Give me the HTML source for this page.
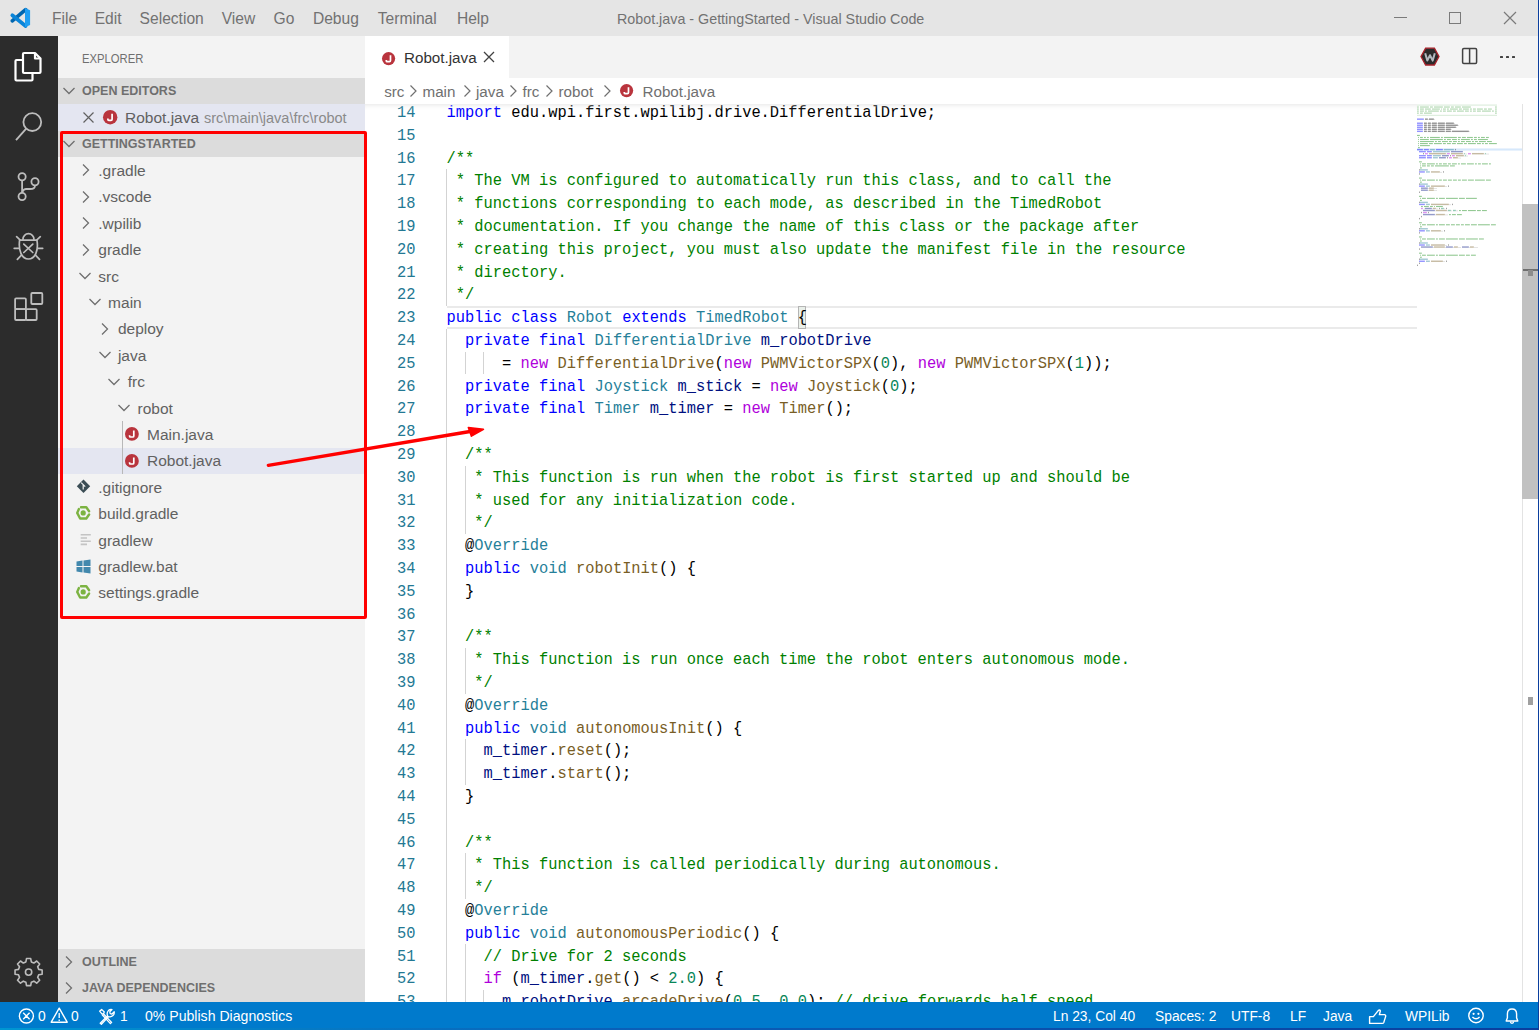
<!DOCTYPE html>
<html><head><meta charset="utf-8">
<style>
*{margin:0;padding:0;box-sizing:border-box}
html,body{width:1539px;height:1030px;overflow:hidden;background:#fff;font-family:"Liberation Sans",sans-serif}
.a{position:absolute}
.nw{white-space:nowrap}
#title{left:0;top:0;width:1539px;height:36px;background:#e5e5e5}
.menu{position:absolute;top:9.5px;font-size:15.6px;line-height:17px;color:#727272;white-space:nowrap}
#act{left:0;top:36px;width:58px;height:966px;background:#2c2c2c}
#side{left:58px;top:36px;width:307px;height:966px;background:#f3f3f3}
.sh{position:absolute;left:0;width:307px;height:26.4px;background:#dcdcdc}
.sht{position:absolute;left:24px;top:6px;font-size:12.5px;line-height:15px;font-weight:bold;color:#6f6f6f;white-space:nowrap}
.row{position:absolute;left:0;width:307px;height:26.4px}
.rt{position:absolute;top:4.8px;font-size:15.5px;line-height:17px;color:#616161;white-space:nowrap}
#tabs{left:365px;top:36px;width:1173px;height:42px;background:#f3f3f3}
#crumb{left:365px;top:78px;width:1173px;height:26px;background:#fff}
.cr{position:absolute;top:4.8px;font-size:15.2px;line-height:17px;color:#707070;white-space:nowrap}
#editor{left:365px;top:104px;width:1173px;height:898px;background:#fff;overflow:hidden}
.ln{position:absolute;left:0;width:50.4px;text-align:right;font-family:"Liberation Mono",monospace;font-size:15.4px;color:#237893;white-space:pre;transform:scaleY(1.1);transform-origin:0 15.5px}
.cl{position:absolute;left:81.6px;font-family:"Liberation Mono",monospace;font-size:15.4px;color:#000;white-space:pre;transform:scaleY(1.1);transform-origin:0 15.5px}
.v{color:#001080}.k{color:#0000ff}.t{color:#267f99}.f{color:#795e26}.n{color:#af00db}.d{color:#098658}.c{color:#008000}
.ig{position:absolute;width:1px;background:#d3d3d3}
#status{left:0;top:1002px;width:1539px;height:26px;background:#007acc}
.st{position:absolute;top:6px;font-size:13.8px;line-height:17px;color:#fff;white-space:nowrap}
</style></head><body>
<div id="title" class="a"><svg class="a" style="left:0;top:0" width="40" height="36" viewBox="0 0 40 36">
<path d="M12.3 20.9 L25.6 9.6" stroke="#0066b0" stroke-width="3.7" stroke-linecap="round"/>
<path d="M12.3 15.3 L25.6 26" stroke="#0a84d8" stroke-width="3.7" stroke-linecap="round"/>
<path d="M25 8.1 L30.1 10.3 L30.1 24.9 L25 27.2 Z" fill="#1f9ef2"/>
</svg><div class="menu" style="left:52.0px;width:22.4px;text-align:center">File</div><div class="menu" style="left:94.7px;width:25.4px;text-align:center">Edit</div><div class="menu" style="left:139.6px;width:61.9px;text-align:center">Selection</div><div class="menu" style="left:221.7px;width:32.6px;text-align:center">View</div><div class="menu" style="left:273.6px;width:19.7px;text-align:center">Go</div><div class="menu" style="left:312.9px;width:45.4px;text-align:center">Debug</div><div class="menu" style="left:377.7px;width:59.2px;text-align:center">Terminal</div><div class="menu" style="left:456.9px;width:32.0px;text-align:center">Help</div><div class="menu" style="left:617px;width:304px;text-align:center;font-size:14.3px;top:10.5px">Robot.java - GettingStarted - Visual Studio Code</div><div class="a" style="left:1393.5px;top:17px;width:13px;height:1px;background:#7a7a7a"></div><div class="a" style="left:1449px;top:12px;width:12px;height:12px;border:1px solid #7a7a7a"></div><svg class="a" style="left:1503px;top:11px" width="14" height="14" viewBox="0 0 14 14"><path d="M1 1 L13 13 M13 1 L1 13" stroke="#7a7a7a" stroke-width="1.2"/></svg></div>
<div id="act" class="a"><svg class="a" style="left:0;top:0" width="58" height="350" viewBox="0 0 58 350">
<g fill="none" stroke="#ffffff" stroke-width="2.2" stroke-linejoin="round">
<path d="M24 17 L35 17 L40.5 22.5 L40.5 36 Q40.5 37 39.5 37 L24 37 Q23 37 23 36 L23 18 Q23 17 24 17 Z"/>
<path d="M35 17 L35 22.5 L40.5 22.5"/>
<path d="M23 24 L16.5 24 Q15.5 24 15.5 25 L15.5 43.5 Q15.5 44.5 16.5 44.5 L31.5 44.5 Q32.5 44.5 32.5 43.5 L32.5 37"/>
</g>
<g fill="none" stroke="#bdbdbd" stroke-width="1.8">
<circle cx="32.3" cy="86.1" r="8.9"/>
<path d="M26.2 92.6 L16 104.2"/>
<circle cx="22.1" cy="140.8" r="3.6"/>
<circle cx="35" cy="145.8" r="3.6"/>
<circle cx="22.1" cy="160.5" r="3.6"/>
<path d="M22.1 144.4 L22.1 156.9"/>
<path d="M35 149.4 Q35 153 30 153 L26 153 Q22.5 153.5 22.3 157"/>
<g stroke-width="1.7" stroke-linecap="round">
<path d="M22.95 203.2 A5.5 5.5 0 0 1 33.95 203.2"/>
<path d="M19.6 204.2 L36.9 204.2 C38.6 213.5 35.6 223 28.45 223 C21.3 223 18.3 213.5 19.6 204.2 Z"/>
<path d="M23.8 208.2 L32.8 216.5 M32.8 208.2 L23.8 216.5"/>
<path d="M16.6 200.7 L20 203.8 M40.3 200.7 L36.9 203.8 M14.2 212.3 L18.6 212.3 M42.7 212.3 L38.3 212.3 M17.4 223.4 L21.2 219.4 M39.5 223.4 L35.7 219.4"/>
</g>
<rect x="15.1" y="262.4" width="10.8" height="10.8" rx="1"/>
<rect x="15.1" y="273.2" width="10.8" height="10.8" rx="1"/>
<rect x="25.9" y="273.2" width="10.8" height="10.8" rx="1"/>
<rect x="31.3" y="257" width="11" height="11" rx="1"/>
</g>
</svg><svg class="a" style="left:0;top:914px" width="58" height="44" viewBox="0 0 58 44"><g transform="translate(28.6 22.1) scale(0.88) translate(-28.6 -24.1)">
<g fill="none" stroke="#bdbdbd" stroke-width="1.8" stroke-linejoin="round">
<path d="M26.2 8.7 L31 8.7 L31.7 12.6 L34.6 13.8 L37.8 11.5 L41.2 14.9 L38.9 18.1 L40.1 21 L44 21.7 L44 26.5 L40.1 27.2 L38.9 30.1 L41.2 33.3 L37.8 36.7 L34.6 34.4 L31.7 35.6 L31 39.5 L26.2 39.5 L25.5 35.6 L22.6 34.4 L19.4 36.7 L16 33.3 L18.3 30.1 L17.1 27.2 L13.2 26.5 L13.2 21.7 L17.1 21 L18.3 18.1 L16 14.9 L19.4 11.5 L22.6 13.8 L25.5 12.6 Z"/>
<circle cx="28.6" cy="24.1" r="3.6"/>
</g></g></svg></div>
<div id="side" class="a"><div class="a nw" style="left:23.6px;top:15.5px;font-size:12.6px;line-height:14px;color:#6f6f6f;transform:scaleX(0.895);transform-origin:0 0">EXPLORER</div><div class="sh" style="top:42.0px"><svg class="a" style="left:4.3px;top:8.2px" width="14" height="10" viewBox="0 0 14 10"><path d="M1.5 2 L7 7.5 L12.5 2" stroke="#6f6f6f" stroke-width="1.3" fill="none"/></svg><div class="sht">OPEN EDITORS</div></div><div class="row" style="top:68.4px;background:#e4e6f1"><svg class="a" style="left:25px;top:8px" width="11" height="11" viewBox="0 0 11 11"><path d="M0.5 0.5 L10.5 10.5 M10.5 0.5 L0.5 10.5" stroke="#616161" stroke-width="1.2"/></svg><svg class="a" style="left:43.5px;top:5.0px" width="16.4" height="16.4" viewBox="0 0 16.4 16.4"><circle cx="8.2" cy="8.2" r="7.2" fill="#b9343d"/><path d="M10.10 4.80 L10.10 10.20 Q10.10 11.30 9.00 11.30 L6.70 11.30 Q5.90 11.30 5.90 10.50 L5.90 9.60" stroke="#fff" stroke-width="1.7" fill="none"/></svg><div class="rt" style="left:67px">Robot.java</div><div class="rt" style="left:146px;font-size:14.5px;top:5.5px;color:#8a8a8a">src\main\java\frc\robot</div></div><div class="sh" style="top:94.8px"><svg class="a" style="left:4.3px;top:8.2px" width="14" height="10" viewBox="0 0 14 10"><path d="M1.5 2 L7 7.5 L12.5 2" stroke="#6f6f6f" stroke-width="1.3" fill="none"/></svg><div class="sht">GETTINGSTARTED</div></div><div class="row" style="top:121.2px;"><svg class="a" style="left:22.5px;top:6.2px" width="10" height="14" viewBox="0 0 10 14"><path d="M2 1.5 L7.5 7 L2 12.5" stroke="#6f6f6f" stroke-width="1.3" fill="none"/></svg><div class="rt" style="left:40.3px">.gradle</div></div><div class="row" style="top:147.6px;"><svg class="a" style="left:22.5px;top:6.2px" width="10" height="14" viewBox="0 0 10 14"><path d="M2 1.5 L7.5 7 L2 12.5" stroke="#6f6f6f" stroke-width="1.3" fill="none"/></svg><div class="rt" style="left:40.3px">.vscode</div></div><div class="row" style="top:174.0px;"><svg class="a" style="left:22.5px;top:6.2px" width="10" height="14" viewBox="0 0 10 14"><path d="M2 1.5 L7.5 7 L2 12.5" stroke="#6f6f6f" stroke-width="1.3" fill="none"/></svg><div class="rt" style="left:40.3px">.wpilib</div></div><div class="row" style="top:200.4px;"><svg class="a" style="left:22.5px;top:6.2px" width="10" height="14" viewBox="0 0 10 14"><path d="M2 1.5 L7.5 7 L2 12.5" stroke="#6f6f6f" stroke-width="1.3" fill="none"/></svg><div class="rt" style="left:40.3px">gradle</div></div><div class="row" style="top:226.8px;"><svg class="a" style="left:20.0px;top:8.2px" width="14" height="10" viewBox="0 0 14 10"><path d="M1.5 2 L7 7.5 L12.5 2" stroke="#6f6f6f" stroke-width="1.3" fill="none"/></svg><div class="rt" style="left:40.3px">src</div></div><div class="row" style="top:253.2px;"><svg class="a" style="left:29.8px;top:8.2px" width="14" height="10" viewBox="0 0 14 10"><path d="M1.5 2 L7 7.5 L12.5 2" stroke="#6f6f6f" stroke-width="1.3" fill="none"/></svg><div class="rt" style="left:50.1px">main</div></div><div class="row" style="top:279.6px;"><svg class="a" style="left:42.1px;top:6.2px" width="10" height="14" viewBox="0 0 10 14"><path d="M2 1.5 L7.5 7 L2 12.5" stroke="#6f6f6f" stroke-width="1.3" fill="none"/></svg><div class="rt" style="left:59.9px">deploy</div></div><div class="row" style="top:306.0px;"><svg class="a" style="left:39.6px;top:8.2px" width="14" height="10" viewBox="0 0 14 10"><path d="M1.5 2 L7 7.5 L12.5 2" stroke="#6f6f6f" stroke-width="1.3" fill="none"/></svg><div class="rt" style="left:59.9px">java</div></div><div class="row" style="top:332.4px;"><svg class="a" style="left:49.4px;top:8.2px" width="14" height="10" viewBox="0 0 14 10"><path d="M1.5 2 L7 7.5 L12.5 2" stroke="#6f6f6f" stroke-width="1.3" fill="none"/></svg><div class="rt" style="left:69.7px">frc</div></div><div class="row" style="top:358.8px;"><svg class="a" style="left:59.2px;top:8.2px" width="14" height="10" viewBox="0 0 14 10"><path d="M1.5 2 L7 7.5 L12.5 2" stroke="#6f6f6f" stroke-width="1.3" fill="none"/></svg><div class="rt" style="left:79.5px">robot</div></div><div class="row" style="top:385.2px;"><svg class="a" style="left:65.5px;top:5.3px" width="15.8" height="15.8" viewBox="0 0 15.8 15.8"><circle cx="7.9" cy="7.9" r="6.9" fill="#b9343d"/><path d="M9.80 4.50 L9.80 9.90 Q9.80 11.00 8.70 11.00 L6.40 11.00 Q5.60 11.00 5.60 10.20 L5.60 9.30" stroke="#fff" stroke-width="1.7" fill="none"/></svg><div class="rt" style="left:89.0px">Main.java</div></div><div class="row" style="top:411.6px;background:#e4e6f1;"><svg class="a" style="left:65.5px;top:5.3px" width="15.8" height="15.8" viewBox="0 0 15.8 15.8"><circle cx="7.9" cy="7.9" r="6.9" fill="#b9343d"/><path d="M9.80 4.50 L9.80 9.90 Q9.80 11.00 8.70 11.00 L6.40 11.00 Q5.60 11.00 5.60 10.20 L5.60 9.30" stroke="#fff" stroke-width="1.7" fill="none"/></svg><div class="rt" style="left:89.0px">Robot.java</div></div><div class="row" style="top:438.0px;"><svg class="a" style="left:18px;top:5.2px" width="15" height="15" viewBox="0 0 15 15"><path d="M7.5 0.6 L14.2 7.3 L7.5 14 L0.8 7.3 Z" fill="#3b4d55"/><path d="M5.2 3.6 L9.2 7.6 M7.2 5.6 L7.2 10.6" stroke="#f3f3f3" stroke-width="1.2"/></svg><div class="rt" style="left:40.3px">.gitignore</div></div><div class="row" style="top:464.4px;"><svg class="a" style="left:17.3px;top:4.2px" width="16" height="16" viewBox="0 0 16 16"><g transform="translate(8.2 7.9)" fill="none" stroke="#7cb342" stroke-width="2.4" stroke-linecap="round" stroke-linejoin="round"><path d="M-2.2 -5.6 L3.1 -5.6 L5.9 -1.6"/><path d="M5.9 1.6 L3.1 5.6 L-3.1 5.6 L-6 0 L-4.3 -3.9"/><circle cx="0" cy="0" r="1.6" fill="#7cb342" stroke-width="2"/></g></svg><div class="rt" style="left:40.3px">build.gradle</div></div><div class="row" style="top:490.8px;"><svg class="a" style="left:22px;top:6px" width="12" height="13" viewBox="0 0 12 13"><path d="M0.7 1.7 H10.8 M0.7 5 H7 M0.7 8.2 H10.8 M0.7 11.4 H7" stroke="#c4c4c4" stroke-width="1.6"/></svg><div class="rt" style="left:40.3px">gradlew</div></div><div class="row" style="top:517.2px;"><svg class="a" style="left:18px;top:6px" width="15" height="15" viewBox="0 0 15 15"><path d="M0.5 2.5 L6.5 1.6 L6.5 7 L0.5 7 Z M7.5 1.4 L14.5 0.4 L14.5 7 L7.5 7 Z M0.5 8 L6.5 8 L6.5 13.4 L0.5 12.5 Z M7.5 8 L14.5 8 L14.5 14.6 L7.5 13.6 Z" fill="#4288ad"/></svg><div class="rt" style="left:40.3px">gradlew.bat</div></div><div class="row" style="top:543.6px;"><svg class="a" style="left:17.3px;top:4.2px" width="16" height="16" viewBox="0 0 16 16"><g transform="translate(8.2 7.9)" fill="none" stroke="#7cb342" stroke-width="2.4" stroke-linecap="round" stroke-linejoin="round"><path d="M-2.2 -5.6 L3.1 -5.6 L5.9 -1.6"/><path d="M5.9 1.6 L3.1 5.6 L-3.1 5.6 L-6 0 L-4.3 -3.9"/><circle cx="0" cy="0" r="1.6" fill="#7cb342" stroke-width="2"/></g></svg><div class="rt" style="left:40.3px">settings.gradle</div></div><div class="a" style="left:63.6px;top:385.2px;width:1px;height:52.8px;background:#b8b8b8"></div><div class="sh" style="top:912.8px"><svg class="a" style="left:5.5px;top:6.2px" width="10" height="14" viewBox="0 0 10 14"><path d="M2 1.5 L7.5 7 L2 12.5" stroke="#6f6f6f" stroke-width="1.3" fill="none"/></svg><div class="sht">OUTLINE</div></div><div class="sh" style="top:939.2px"><svg class="a" style="left:5.5px;top:6.2px" width="10" height="14" viewBox="0 0 10 14"><path d="M2 1.5 L7.5 7 L2 12.5" stroke="#6f6f6f" stroke-width="1.3" fill="none"/></svg><div class="sht">JAVA DEPENDENCIES</div></div></div>
<div id="tabs" class="a"><div class="a" style="left:0;top:0;width:144px;height:42px;background:#fff"><svg class="a" style="left:15.7px;top:14.7px" width="15.2" height="15.2" viewBox="0 0 15.2 15.2"><circle cx="7.6" cy="7.6" r="6.6" fill="#b9343d"/><path d="M9.50 4.20 L9.50 9.60 Q9.50 10.70 8.40 10.70 L6.10 10.70 Q5.30 10.70 5.30 9.90 L5.30 9.00" stroke="#fff" stroke-width="1.7" fill="none"/></svg><div class="a nw" style="left:39px;top:13px;font-size:15.2px;line-height:17px;color:#333">Robot.java</div><svg class="a" style="left:118px;top:15px" width="12" height="12" viewBox="0 0 12 12"><path d="M1 1 L11 11 M11 1 L1 11" stroke="#424242" stroke-width="1.3"/></svg></div><svg class="a" style="left:1055px;top:11px" width="20" height="19" viewBox="0 0 20 19"><path d="M5.6 1.2 L14.4 1.2 L19 9.6 L14.4 18 L5.6 18 L1 9.6 Z" fill="#2b2b2b" stroke="#a8222b" stroke-width="1.3"/><path d="M5.2 6.2 L7.3 13.6 L10 8.2 L12.7 13.6 L14.8 6.2" stroke="#b4b8bf" stroke-width="2" fill="none" stroke-linejoin="round"/></svg><svg class="a" style="left:1096px;top:11px" width="18" height="18" viewBox="0 0 18 18"><rect x="1.6" y="1.6" width="14" height="14.8" rx="1.2" fill="none" stroke="#424242" stroke-width="1.5"/><path d="M8.6 2 L8.6 16" stroke="#424242" stroke-width="1.5"/></svg><div class="a" style="left:1135.3px;top:19.8px;width:2.3px;height:2.3px;border-radius:0.5px;background:#424242"></div><div class="a" style="left:1141.3px;top:19.8px;width:2.3px;height:2.3px;border-radius:0.5px;background:#424242"></div><div class="a" style="left:1147.3px;top:19.8px;width:2.3px;height:2.3px;border-radius:0.5px;background:#424242"></div></div>
<div id="crumb" class="a"><div class="cr" style="left:19.2px">src</div><div class="cr" style="left:57.5px">main</div><div class="cr" style="left:111.0px">java</div><div class="cr" style="left:157.5px">frc</div><div class="cr" style="left:193.5px">robot</div><div class="cr" style="left:277.5px">Robot.java</div><svg class="a" style="left:43.5px;top:6px" width="9" height="14" viewBox="0 0 9 14"><path d="M1.5 1.5 L7 7 L1.5 12.5" stroke="#707070" stroke-width="1.2" fill="none"/></svg><svg class="a" style="left:97.5px;top:6px" width="9" height="14" viewBox="0 0 9 14"><path d="M1.5 1.5 L7 7 L1.5 12.5" stroke="#707070" stroke-width="1.2" fill="none"/></svg><svg class="a" style="left:143.5px;top:6px" width="9" height="14" viewBox="0 0 9 14"><path d="M1.5 1.5 L7 7 L1.5 12.5" stroke="#707070" stroke-width="1.2" fill="none"/></svg><svg class="a" style="left:179.5px;top:6px" width="9" height="14" viewBox="0 0 9 14"><path d="M1.5 1.5 L7 7 L1.5 12.5" stroke="#707070" stroke-width="1.2" fill="none"/></svg><svg class="a" style="left:237.5px;top:6px" width="9" height="14" viewBox="0 0 9 14"><path d="M1.5 1.5 L7 7 L1.5 12.5" stroke="#707070" stroke-width="1.2" fill="none"/></svg><svg class="a" style="left:254.4px;top:5.4px" width="15.2" height="15.2" viewBox="0 0 15.2 15.2"><circle cx="7.6" cy="7.6" r="6.6" fill="#b9343d"/><path d="M9.50 4.20 L9.50 9.60 Q9.50 10.70 8.40 10.70 L6.10 10.70 Q5.30 10.70 5.30 9.90 L5.30 9.00" stroke="#fff" stroke-width="1.7" fill="none"/></svg></div>
<div id="editor" class="a"><div class="a" style="left:82px;top:202px;width:970px;height:23px;border-top:2px solid #eaeaea;border-bottom:2px solid #eaeaea"></div><div class="a" style="left:433px;top:202px;width:8px;height:23px;border:1.2px solid #b4b4b4;background:#e9efe9"></div><div class="ig" style="left:81.0px;top:65.20px;height:22.80px"></div><div class="ig" style="left:81.0px;top:88.00px;height:22.80px"></div><div class="ig" style="left:81.0px;top:110.80px;height:22.80px"></div><div class="ig" style="left:81.0px;top:133.60px;height:22.80px"></div><div class="ig" style="left:81.0px;top:156.40px;height:22.80px"></div><div class="ig" style="left:81.0px;top:179.20px;height:22.80px"></div><div class="ig" style="left:81.0px;top:224.80px;height:22.80px"></div><div class="ig" style="left:81.0px;top:247.60px;height:22.80px"></div><div class="ig" style="left:100.0px;top:247.60px;height:22.80px"></div><div class="ig" style="left:118.4px;top:247.60px;height:22.80px"></div><div class="ig" style="left:81.0px;top:270.40px;height:22.80px"></div><div class="ig" style="left:81.0px;top:293.20px;height:22.80px"></div><div class="ig" style="left:81.0px;top:316.00px;height:22.80px"></div><div class="ig" style="left:81.0px;top:338.80px;height:22.80px"></div><div class="ig" style="left:81.0px;top:361.60px;height:22.80px"></div><div class="ig" style="left:100.0px;top:361.60px;height:22.80px"></div><div class="ig" style="left:81.0px;top:384.40px;height:22.80px"></div><div class="ig" style="left:100.0px;top:384.40px;height:22.80px"></div><div class="ig" style="left:81.0px;top:407.20px;height:22.80px"></div><div class="ig" style="left:100.0px;top:407.20px;height:22.80px"></div><div class="ig" style="left:81.0px;top:430.00px;height:22.80px"></div><div class="ig" style="left:81.0px;top:452.80px;height:22.80px"></div><div class="ig" style="left:81.0px;top:475.60px;height:22.80px"></div><div class="ig" style="left:81.0px;top:498.40px;height:22.80px"></div><div class="ig" style="left:81.0px;top:521.20px;height:22.80px"></div><div class="ig" style="left:81.0px;top:544.00px;height:22.80px"></div><div class="ig" style="left:100.0px;top:544.00px;height:22.80px"></div><div class="ig" style="left:81.0px;top:566.80px;height:22.80px"></div><div class="ig" style="left:100.0px;top:566.80px;height:22.80px"></div><div class="ig" style="left:81.0px;top:589.60px;height:22.80px"></div><div class="ig" style="left:81.0px;top:612.40px;height:22.80px"></div><div class="ig" style="left:81.0px;top:635.20px;height:22.80px"></div><div class="ig" style="left:100.0px;top:635.20px;height:22.80px"></div><div class="ig" style="left:81.0px;top:658.00px;height:22.80px"></div><div class="ig" style="left:100.0px;top:658.00px;height:22.80px"></div><div class="ig" style="left:81.0px;top:680.80px;height:22.80px"></div><div class="ig" style="left:81.0px;top:703.60px;height:22.80px"></div><div class="ig" style="left:81.0px;top:726.40px;height:22.80px"></div><div class="ig" style="left:81.0px;top:749.20px;height:22.80px"></div><div class="ig" style="left:100.0px;top:749.20px;height:22.80px"></div><div class="ig" style="left:81.0px;top:772.00px;height:22.80px"></div><div class="ig" style="left:100.0px;top:772.00px;height:22.80px"></div><div class="ig" style="left:81.0px;top:794.80px;height:22.80px"></div><div class="ig" style="left:81.0px;top:817.60px;height:22.80px"></div><div class="ig" style="left:81.0px;top:840.40px;height:22.80px"></div><div class="ig" style="left:100.0px;top:840.40px;height:22.80px"></div><div class="ig" style="left:81.0px;top:863.20px;height:22.80px"></div><div class="ig" style="left:100.0px;top:863.20px;height:22.80px"></div><div class="ig" style="left:81.0px;top:886.00px;height:22.80px"></div><div class="ig" style="left:100.0px;top:886.00px;height:22.80px"></div><div class="ig" style="left:118.4px;top:886.00px;height:22.80px"></div><div class="ln" style="top:-2.00px;line-height:22.8px">14</div><div class="cl" style="top:-2.00px;line-height:22.8px"><span class="k">import</span> edu.wpi.first.wpilibj.drive.DifferentialDrive;</div><div class="ln" style="top:20.80px;line-height:22.8px">15</div><div class="cl" style="top:20.80px;line-height:22.8px"></div><div class="ln" style="top:43.60px;line-height:22.8px">16</div><div class="cl" style="top:43.60px;line-height:22.8px"><span class="c">/**</span></div><div class="ln" style="top:66.40px;line-height:22.8px">17</div><div class="cl" style="top:66.40px;line-height:22.8px"><span class="c"> * The VM is configured to automatically run this class, and to call the</span></div><div class="ln" style="top:89.20px;line-height:22.8px">18</div><div class="cl" style="top:89.20px;line-height:22.8px"><span class="c"> * functions corresponding to each mode, as described in the TimedRobot</span></div><div class="ln" style="top:112.00px;line-height:22.8px">19</div><div class="cl" style="top:112.00px;line-height:22.8px"><span class="c"> * documentation. If you change the name of this class or the package after</span></div><div class="ln" style="top:134.80px;line-height:22.8px">20</div><div class="cl" style="top:134.80px;line-height:22.8px"><span class="c"> * creating this project, you must also update the manifest file in the resource</span></div><div class="ln" style="top:157.60px;line-height:22.8px">21</div><div class="cl" style="top:157.60px;line-height:22.8px"><span class="c"> * directory.</span></div><div class="ln" style="top:180.40px;line-height:22.8px">22</div><div class="cl" style="top:180.40px;line-height:22.8px"><span class="c"> */</span></div><div class="ln" style="top:203.20px;line-height:22.8px">23</div><div class="cl" style="top:203.20px;line-height:22.8px"><span class="k">public</span> <span class="k">class</span> <span class="t">Robot</span> <span class="k">extends</span> <span class="t">TimedRobot</span> {</div><div class="ln" style="top:226.00px;line-height:22.8px">24</div><div class="cl" style="top:226.00px;line-height:22.8px">  <span class="k">private</span> <span class="k">final</span> <span class="t">DifferentialDrive</span> <span class="v">m_robotDrive</span></div><div class="ln" style="top:248.80px;line-height:22.8px">25</div><div class="cl" style="top:248.80px;line-height:22.8px">      = <span class="n">new</span> <span class="f">DifferentialDrive</span>(<span class="n">new</span> <span class="f">PWMVictorSPX</span>(<span class="d">0</span>), <span class="n">new</span> <span class="f">PWMVictorSPX</span>(<span class="d">1</span>));</div><div class="ln" style="top:271.60px;line-height:22.8px">26</div><div class="cl" style="top:271.60px;line-height:22.8px">  <span class="k">private</span> <span class="k">final</span> <span class="t">Joystick</span> <span class="v">m_stick</span> = <span class="n">new</span> <span class="f">Joystick</span>(<span class="d">0</span>);</div><div class="ln" style="top:294.40px;line-height:22.8px">27</div><div class="cl" style="top:294.40px;line-height:22.8px">  <span class="k">private</span> <span class="k">final</span> <span class="t">Timer</span> <span class="v">m_timer</span> = <span class="n">new</span> <span class="f">Timer</span>();</div><div class="ln" style="top:317.20px;line-height:22.8px">28</div><div class="cl" style="top:317.20px;line-height:22.8px"></div><div class="ln" style="top:340.00px;line-height:22.8px">29</div><div class="cl" style="top:340.00px;line-height:22.8px"><span class="c">  /**</span></div><div class="ln" style="top:362.80px;line-height:22.8px">30</div><div class="cl" style="top:362.80px;line-height:22.8px"><span class="c">   * This function is run when the robot is first started up and should be</span></div><div class="ln" style="top:385.60px;line-height:22.8px">31</div><div class="cl" style="top:385.60px;line-height:22.8px"><span class="c">   * used for any initialization code.</span></div><div class="ln" style="top:408.40px;line-height:22.8px">32</div><div class="cl" style="top:408.40px;line-height:22.8px"><span class="c">   */</span></div><div class="ln" style="top:431.20px;line-height:22.8px">33</div><div class="cl" style="top:431.20px;line-height:22.8px">  @<span class="t">Override</span></div><div class="ln" style="top:454.00px;line-height:22.8px">34</div><div class="cl" style="top:454.00px;line-height:22.8px">  <span class="k">public</span> <span class="t">void</span> <span class="f">robotInit</span>() {</div><div class="ln" style="top:476.80px;line-height:22.8px">35</div><div class="cl" style="top:476.80px;line-height:22.8px">  }</div><div class="ln" style="top:499.60px;line-height:22.8px">36</div><div class="cl" style="top:499.60px;line-height:22.8px"></div><div class="ln" style="top:522.40px;line-height:22.8px">37</div><div class="cl" style="top:522.40px;line-height:22.8px"><span class="c">  /**</span></div><div class="ln" style="top:545.20px;line-height:22.8px">38</div><div class="cl" style="top:545.20px;line-height:22.8px"><span class="c">   * This function is run once each time the robot enters autonomous mode.</span></div><div class="ln" style="top:568.00px;line-height:22.8px">39</div><div class="cl" style="top:568.00px;line-height:22.8px"><span class="c">   */</span></div><div class="ln" style="top:590.80px;line-height:22.8px">40</div><div class="cl" style="top:590.80px;line-height:22.8px">  @<span class="t">Override</span></div><div class="ln" style="top:613.60px;line-height:22.8px">41</div><div class="cl" style="top:613.60px;line-height:22.8px">  <span class="k">public</span> <span class="t">void</span> <span class="f">autonomousInit</span>() {</div><div class="ln" style="top:636.40px;line-height:22.8px">42</div><div class="cl" style="top:636.40px;line-height:22.8px">    <span class="v">m_timer</span>.<span class="f">reset</span>();</div><div class="ln" style="top:659.20px;line-height:22.8px">43</div><div class="cl" style="top:659.20px;line-height:22.8px">    <span class="v">m_timer</span>.<span class="f">start</span>();</div><div class="ln" style="top:682.00px;line-height:22.8px">44</div><div class="cl" style="top:682.00px;line-height:22.8px">  }</div><div class="ln" style="top:704.80px;line-height:22.8px">45</div><div class="cl" style="top:704.80px;line-height:22.8px"></div><div class="ln" style="top:727.60px;line-height:22.8px">46</div><div class="cl" style="top:727.60px;line-height:22.8px"><span class="c">  /**</span></div><div class="ln" style="top:750.40px;line-height:22.8px">47</div><div class="cl" style="top:750.40px;line-height:22.8px"><span class="c">   * This function is called periodically during autonomous.</span></div><div class="ln" style="top:773.20px;line-height:22.8px">48</div><div class="cl" style="top:773.20px;line-height:22.8px"><span class="c">   */</span></div><div class="ln" style="top:796.00px;line-height:22.8px">49</div><div class="cl" style="top:796.00px;line-height:22.8px">  @<span class="t">Override</span></div><div class="ln" style="top:818.80px;line-height:22.8px">50</div><div class="cl" style="top:818.80px;line-height:22.8px">  <span class="k">public</span> <span class="t">void</span> <span class="f">autonomousPeriodic</span>() {</div><div class="ln" style="top:841.60px;line-height:22.8px">51</div><div class="cl" style="top:841.60px;line-height:22.8px">    <span class="c">// Drive for 2 seconds</span></div><div class="ln" style="top:864.40px;line-height:22.8px">52</div><div class="cl" style="top:864.40px;line-height:22.8px">    <span class="n">if</span> (<span class="v">m_timer</span>.<span class="f">get</span>() &lt; <span class="d">2.0</span>) {</div><div class="ln" style="top:887.20px;line-height:22.8px">53</div><div class="cl" style="top:887.20px;line-height:22.8px">      <span class="v">m_robotDrive</span>.<span class="f">arcadeDrive</span>(<span class="d">0.5</span>, <span class="d">0.0</span>); <span class="c">// drive forwards half speed</span></div><div class="a" style="left:0;top:0;width:1052px;height:6px;box-shadow:inset 0 6px 6px -6px #dddddd"></div><svg class="a" style="left:1052px;top:0.3px" width="105" height="175" viewBox="0 0 105 175"><rect x="0" y="44.46" width="105" height="2.1" fill="#d6e8fb"/><g opacity="0.42"><rect x="0.00" y="0.75" width="80.00" height="0.6" fill="#008000" opacity="0.6"/><rect x="0.00" y="2.48" width="1.85" height="1.1" fill="#008000" opacity="0.75"/><rect x="3.00" y="2.48" width="8.85" height="1.1" fill="#008000" opacity="0.75"/><rect x="13.00" y="2.48" width="2.85" height="1.1" fill="#008000" opacity="0.75"/><rect x="17.00" y="2.48" width="8.85" height="1.1" fill="#008000" opacity="0.75"/><rect x="27.00" y="2.48" width="5.85" height="1.1" fill="#008000" opacity="0.75"/><rect x="34.00" y="2.48" width="2.85" height="1.1" fill="#008000" opacity="0.75"/><rect x="38.00" y="2.48" width="5.85" height="1.1" fill="#008000" opacity="0.75"/><rect x="45.00" y="2.48" width="8.85" height="1.1" fill="#008000" opacity="0.75"/><rect x="78.00" y="2.48" width="1.85" height="1.1" fill="#008000" opacity="0.75"/><rect x="0.00" y="4.51" width="1.85" height="1.1" fill="#008000" opacity="0.75"/><rect x="3.00" y="4.51" width="3.85" height="1.1" fill="#008000" opacity="0.75"/><rect x="8.00" y="4.51" width="5.85" height="1.1" fill="#008000" opacity="0.75"/><rect x="15.00" y="4.51" width="7.85" height="1.1" fill="#008000" opacity="0.75"/><rect x="24.00" y="4.51" width="0.85" height="1.1" fill="#008000" opacity="0.75"/><rect x="26.00" y="4.51" width="2.85" height="1.1" fill="#008000" opacity="0.75"/><rect x="30.00" y="4.51" width="1.85" height="1.1" fill="#008000" opacity="0.75"/><rect x="33.00" y="4.51" width="7.85" height="1.1" fill="#008000" opacity="0.75"/><rect x="42.00" y="4.51" width="2.85" height="1.1" fill="#008000" opacity="0.75"/><rect x="46.00" y="4.51" width="5.85" height="1.1" fill="#008000" opacity="0.75"/><rect x="53.00" y="4.51" width="1.85" height="1.1" fill="#008000" opacity="0.75"/><rect x="56.00" y="4.51" width="2.85" height="1.1" fill="#008000" opacity="0.75"/><rect x="60.00" y="4.51" width="5.85" height="1.1" fill="#008000" opacity="0.75"/><rect x="67.00" y="4.51" width="2.85" height="1.1" fill="#008000" opacity="0.75"/><rect x="71.00" y="4.51" width="3.85" height="1.1" fill="#008000" opacity="0.75"/><rect x="78.00" y="4.51" width="1.85" height="1.1" fill="#008000" opacity="0.75"/><rect x="0.00" y="6.54" width="1.85" height="1.1" fill="#008000" opacity="0.75"/><rect x="3.00" y="6.54" width="3.85" height="1.1" fill="#008000" opacity="0.75"/><rect x="8.00" y="6.54" width="1.85" height="1.1" fill="#008000" opacity="0.75"/><rect x="11.00" y="6.54" width="10.85" height="1.1" fill="#008000" opacity="0.75"/><rect x="23.00" y="6.54" width="1.85" height="1.1" fill="#008000" opacity="0.75"/><rect x="26.00" y="6.54" width="2.85" height="1.1" fill="#008000" opacity="0.75"/><rect x="30.00" y="6.54" width="4.85" height="1.1" fill="#008000" opacity="0.75"/><rect x="36.00" y="6.54" width="2.85" height="1.1" fill="#008000" opacity="0.75"/><rect x="40.00" y="6.54" width="6.85" height="1.1" fill="#008000" opacity="0.75"/><rect x="48.00" y="6.54" width="3.85" height="1.1" fill="#008000" opacity="0.75"/><rect x="53.00" y="6.54" width="1.85" height="1.1" fill="#008000" opacity="0.75"/><rect x="56.00" y="6.54" width="2.85" height="1.1" fill="#008000" opacity="0.75"/><rect x="60.00" y="6.54" width="3.85" height="1.1" fill="#008000" opacity="0.75"/><rect x="65.00" y="6.54" width="8.85" height="1.1" fill="#008000" opacity="0.75"/><rect x="75.00" y="6.54" width="1.85" height="1.1" fill="#008000" opacity="0.75"/><rect x="78.00" y="6.54" width="1.85" height="1.1" fill="#008000" opacity="0.75"/><rect x="0.00" y="8.57" width="1.85" height="1.1" fill="#008000" opacity="0.75"/><rect x="3.00" y="8.57" width="2.85" height="1.1" fill="#008000" opacity="0.75"/><rect x="7.00" y="8.57" width="7.85" height="1.1" fill="#008000" opacity="0.75"/><rect x="78.00" y="8.57" width="1.85" height="1.1" fill="#008000" opacity="0.75"/><rect x="0.00" y="10.90" width="80.00" height="0.6" fill="#008000" opacity="0.6"/><rect x="0.00" y="14.46" width="6.85" height="1.4" fill="#0000ff"/><rect x="8.00" y="14.46" width="2.85" height="1.4" fill="#000000"/><rect x="11.20" y="15.16" width="0.6" height="0.7" fill="#000000" opacity="0.6"/><rect x="12.00" y="14.46" width="4.85" height="1.4" fill="#000000"/><rect x="17.20" y="15.16" width="0.6" height="0.7" fill="#000000" opacity="0.6"/><rect x="0.00" y="18.52" width="5.85" height="1.4" fill="#0000ff"/><rect x="7.00" y="18.52" width="2.85" height="1.4" fill="#000000"/><rect x="10.20" y="19.22" width="0.6" height="0.7" fill="#000000" opacity="0.6"/><rect x="11.00" y="18.52" width="2.85" height="1.4" fill="#000000"/><rect x="14.20" y="19.22" width="0.6" height="0.7" fill="#000000" opacity="0.6"/><rect x="15.00" y="18.52" width="4.85" height="1.4" fill="#000000"/><rect x="20.20" y="19.22" width="0.6" height="0.7" fill="#000000" opacity="0.6"/><rect x="21.00" y="18.52" width="6.85" height="1.4" fill="#000000"/><rect x="28.20" y="19.22" width="0.6" height="0.7" fill="#000000" opacity="0.6"/><rect x="29.00" y="18.52" width="7.85" height="1.4" fill="#000000"/><rect x="37.20" y="19.22" width="0.6" height="0.7" fill="#000000" opacity="0.6"/><rect x="0.00" y="20.55" width="5.85" height="1.4" fill="#0000ff"/><rect x="7.00" y="20.55" width="2.85" height="1.4" fill="#000000"/><rect x="10.20" y="21.25" width="0.6" height="0.7" fill="#000000" opacity="0.6"/><rect x="11.00" y="20.55" width="2.85" height="1.4" fill="#000000"/><rect x="14.20" y="21.25" width="0.6" height="0.7" fill="#000000" opacity="0.6"/><rect x="15.00" y="20.55" width="4.85" height="1.4" fill="#000000"/><rect x="20.20" y="21.25" width="0.6" height="0.7" fill="#000000" opacity="0.6"/><rect x="21.00" y="20.55" width="6.85" height="1.4" fill="#000000"/><rect x="28.20" y="21.25" width="0.6" height="0.7" fill="#000000" opacity="0.6"/><rect x="29.00" y="20.55" width="11.85" height="1.4" fill="#000000"/><rect x="41.20" y="21.25" width="0.6" height="0.7" fill="#000000" opacity="0.6"/><rect x="0.00" y="22.58" width="5.85" height="1.4" fill="#0000ff"/><rect x="7.00" y="22.58" width="2.85" height="1.4" fill="#000000"/><rect x="10.20" y="23.28" width="0.6" height="0.7" fill="#000000" opacity="0.6"/><rect x="11.00" y="22.58" width="2.85" height="1.4" fill="#000000"/><rect x="14.20" y="23.28" width="0.6" height="0.7" fill="#000000" opacity="0.6"/><rect x="15.00" y="22.58" width="4.85" height="1.4" fill="#000000"/><rect x="20.20" y="23.28" width="0.6" height="0.7" fill="#000000" opacity="0.6"/><rect x="21.00" y="22.58" width="6.85" height="1.4" fill="#000000"/><rect x="28.20" y="23.28" width="0.6" height="0.7" fill="#000000" opacity="0.6"/><rect x="29.00" y="22.58" width="9.85" height="1.4" fill="#000000"/><rect x="39.20" y="23.28" width="0.6" height="0.7" fill="#000000" opacity="0.6"/><rect x="0.00" y="24.61" width="5.85" height="1.4" fill="#0000ff"/><rect x="7.00" y="24.61" width="2.85" height="1.4" fill="#000000"/><rect x="10.20" y="25.31" width="0.6" height="0.7" fill="#000000" opacity="0.6"/><rect x="11.00" y="24.61" width="2.85" height="1.4" fill="#000000"/><rect x="14.20" y="25.31" width="0.6" height="0.7" fill="#000000" opacity="0.6"/><rect x="15.00" y="24.61" width="4.85" height="1.4" fill="#000000"/><rect x="20.20" y="25.31" width="0.6" height="0.7" fill="#000000" opacity="0.6"/><rect x="21.00" y="24.61" width="6.85" height="1.4" fill="#000000"/><rect x="28.20" y="25.31" width="0.6" height="0.7" fill="#000000" opacity="0.6"/><rect x="29.00" y="24.61" width="4.85" height="1.4" fill="#000000"/><rect x="34.20" y="25.31" width="0.6" height="0.7" fill="#000000" opacity="0.6"/><rect x="0.00" y="26.64" width="5.85" height="1.4" fill="#0000ff"/><rect x="7.00" y="26.64" width="2.85" height="1.4" fill="#000000"/><rect x="10.20" y="27.34" width="0.6" height="0.7" fill="#000000" opacity="0.6"/><rect x="11.00" y="26.64" width="2.85" height="1.4" fill="#000000"/><rect x="14.20" y="27.34" width="0.6" height="0.7" fill="#000000" opacity="0.6"/><rect x="15.00" y="26.64" width="4.85" height="1.4" fill="#000000"/><rect x="20.20" y="27.34" width="0.6" height="0.7" fill="#000000" opacity="0.6"/><rect x="21.00" y="26.64" width="6.85" height="1.4" fill="#000000"/><rect x="28.20" y="27.34" width="0.6" height="0.7" fill="#000000" opacity="0.6"/><rect x="29.00" y="26.64" width="4.85" height="1.4" fill="#000000"/><rect x="34.20" y="27.34" width="0.6" height="0.7" fill="#000000" opacity="0.6"/><rect x="35.00" y="26.64" width="16.85" height="1.4" fill="#000000"/><rect x="52.20" y="27.34" width="0.6" height="0.7" fill="#000000" opacity="0.6"/><rect x="0.00" y="30.90" width="2.85" height="1.1" fill="#008000" opacity="1"/><rect x="1.00" y="32.93" width="0.85" height="1.1" fill="#008000" opacity="1"/><rect x="3.00" y="32.93" width="2.85" height="1.1" fill="#008000" opacity="1"/><rect x="7.00" y="32.93" width="1.85" height="1.1" fill="#008000" opacity="1"/><rect x="10.00" y="32.93" width="1.85" height="1.1" fill="#008000" opacity="1"/><rect x="13.00" y="32.93" width="9.85" height="1.1" fill="#008000" opacity="1"/><rect x="24.00" y="32.93" width="1.85" height="1.1" fill="#008000" opacity="1"/><rect x="27.00" y="32.93" width="12.85" height="1.1" fill="#008000" opacity="1"/><rect x="41.00" y="32.93" width="2.85" height="1.1" fill="#008000" opacity="1"/><rect x="45.00" y="32.93" width="3.85" height="1.1" fill="#008000" opacity="1"/><rect x="50.00" y="32.93" width="5.85" height="1.1" fill="#008000" opacity="1"/><rect x="57.00" y="32.93" width="2.85" height="1.1" fill="#008000" opacity="1"/><rect x="61.00" y="32.93" width="1.85" height="1.1" fill="#008000" opacity="1"/><rect x="64.00" y="32.93" width="3.85" height="1.1" fill="#008000" opacity="1"/><rect x="69.00" y="32.93" width="2.85" height="1.1" fill="#008000" opacity="1"/><rect x="1.00" y="34.96" width="0.85" height="1.1" fill="#008000" opacity="1"/><rect x="3.00" y="34.96" width="8.85" height="1.1" fill="#008000" opacity="1"/><rect x="13.00" y="34.96" width="12.85" height="1.1" fill="#008000" opacity="1"/><rect x="27.00" y="34.96" width="1.85" height="1.1" fill="#008000" opacity="1"/><rect x="30.00" y="34.96" width="3.85" height="1.1" fill="#008000" opacity="1"/><rect x="35.00" y="34.96" width="4.85" height="1.1" fill="#008000" opacity="1"/><rect x="41.00" y="34.96" width="1.85" height="1.1" fill="#008000" opacity="1"/><rect x="44.00" y="34.96" width="8.85" height="1.1" fill="#008000" opacity="1"/><rect x="54.00" y="34.96" width="1.85" height="1.1" fill="#008000" opacity="1"/><rect x="57.00" y="34.96" width="2.85" height="1.1" fill="#008000" opacity="1"/><rect x="61.00" y="34.96" width="9.85" height="1.1" fill="#008000" opacity="1"/><rect x="1.00" y="36.99" width="0.85" height="1.1" fill="#008000" opacity="1"/><rect x="3.00" y="36.99" width="13.85" height="1.1" fill="#008000" opacity="1"/><rect x="18.00" y="36.99" width="1.85" height="1.1" fill="#008000" opacity="1"/><rect x="21.00" y="36.99" width="2.85" height="1.1" fill="#008000" opacity="1"/><rect x="25.00" y="36.99" width="5.85" height="1.1" fill="#008000" opacity="1"/><rect x="32.00" y="36.99" width="2.85" height="1.1" fill="#008000" opacity="1"/><rect x="36.00" y="36.99" width="3.85" height="1.1" fill="#008000" opacity="1"/><rect x="41.00" y="36.99" width="1.85" height="1.1" fill="#008000" opacity="1"/><rect x="44.00" y="36.99" width="3.85" height="1.1" fill="#008000" opacity="1"/><rect x="49.00" y="36.99" width="4.85" height="1.1" fill="#008000" opacity="1"/><rect x="55.00" y="36.99" width="1.85" height="1.1" fill="#008000" opacity="1"/><rect x="58.00" y="36.99" width="2.85" height="1.1" fill="#008000" opacity="1"/><rect x="62.00" y="36.99" width="6.85" height="1.1" fill="#008000" opacity="1"/><rect x="70.00" y="36.99" width="4.85" height="1.1" fill="#008000" opacity="1"/><rect x="1.00" y="39.02" width="0.85" height="1.1" fill="#008000" opacity="1"/><rect x="3.00" y="39.02" width="7.85" height="1.1" fill="#008000" opacity="1"/><rect x="12.00" y="39.02" width="3.85" height="1.1" fill="#008000" opacity="1"/><rect x="17.00" y="39.02" width="7.85" height="1.1" fill="#008000" opacity="1"/><rect x="26.00" y="39.02" width="2.85" height="1.1" fill="#008000" opacity="1"/><rect x="30.00" y="39.02" width="3.85" height="1.1" fill="#008000" opacity="1"/><rect x="35.00" y="39.02" width="3.85" height="1.1" fill="#008000" opacity="1"/><rect x="40.00" y="39.02" width="5.85" height="1.1" fill="#008000" opacity="1"/><rect x="47.00" y="39.02" width="2.85" height="1.1" fill="#008000" opacity="1"/><rect x="51.00" y="39.02" width="7.85" height="1.1" fill="#008000" opacity="1"/><rect x="60.00" y="39.02" width="3.85" height="1.1" fill="#008000" opacity="1"/><rect x="65.00" y="39.02" width="1.85" height="1.1" fill="#008000" opacity="1"/><rect x="68.00" y="39.02" width="2.85" height="1.1" fill="#008000" opacity="1"/><rect x="72.00" y="39.02" width="7.85" height="1.1" fill="#008000" opacity="1"/><rect x="1.00" y="41.05" width="0.85" height="1.1" fill="#008000" opacity="1"/><rect x="3.00" y="41.05" width="9.85" height="1.1" fill="#008000" opacity="1"/><rect x="1.00" y="43.08" width="1.85" height="1.1" fill="#008000" opacity="1"/><rect x="0.00" y="44.91" width="5.85" height="1.4" fill="#0000ff"/><rect x="7.00" y="44.91" width="4.85" height="1.4" fill="#0000ff"/><rect x="13.00" y="44.91" width="4.85" height="1.4" fill="#267f99"/><rect x="19.00" y="44.91" width="6.85" height="1.4" fill="#0000ff"/><rect x="27.00" y="44.91" width="9.85" height="1.4" fill="#267f99"/><rect x="38.00" y="44.91" width="0.85" height="1.4" fill="#000000"/><rect x="2.00" y="46.94" width="6.85" height="1.4" fill="#0000ff"/><rect x="10.00" y="46.94" width="4.85" height="1.4" fill="#0000ff"/><rect x="16.00" y="46.94" width="16.85" height="1.4" fill="#267f99"/><rect x="34.00" y="46.94" width="11.85" height="1.4" fill="#001080"/><rect x="6.00" y="48.97" width="0.85" height="1.4" fill="#000000"/><rect x="8.00" y="48.97" width="2.85" height="1.4" fill="#af00db"/><rect x="12.00" y="48.97" width="16.85" height="1.4" fill="#795e26"/><rect x="29.20" y="49.67" width="0.6" height="0.7" fill="#000000" opacity="0.6"/><rect x="30.00" y="48.97" width="2.85" height="1.4" fill="#af00db"/><rect x="34.00" y="48.97" width="11.85" height="1.4" fill="#795e26"/><rect x="46.20" y="49.67" width="0.6" height="0.7" fill="#000000" opacity="0.6"/><rect x="47.00" y="48.97" width="0.85" height="1.4" fill="#098658"/><rect x="48.20" y="49.67" width="0.6" height="0.7" fill="#000000" opacity="0.6"/><rect x="49.20" y="49.67" width="0.6" height="0.7" fill="#000000" opacity="0.6"/><rect x="51.00" y="48.97" width="2.85" height="1.4" fill="#af00db"/><rect x="55.00" y="48.97" width="11.85" height="1.4" fill="#795e26"/><rect x="67.20" y="49.67" width="0.6" height="0.7" fill="#000000" opacity="0.6"/><rect x="68.00" y="48.97" width="0.85" height="1.4" fill="#098658"/><rect x="69.20" y="49.67" width="0.6" height="0.7" fill="#000000" opacity="0.6"/><rect x="70.20" y="49.67" width="0.6" height="0.7" fill="#000000" opacity="0.6"/><rect x="71.20" y="49.67" width="0.6" height="0.7" fill="#000000" opacity="0.6"/><rect x="2.00" y="51.00" width="6.85" height="1.4" fill="#0000ff"/><rect x="10.00" y="51.00" width="4.85" height="1.4" fill="#0000ff"/><rect x="16.00" y="51.00" width="7.85" height="1.4" fill="#267f99"/><rect x="25.00" y="51.00" width="6.85" height="1.4" fill="#001080"/><rect x="33.00" y="51.00" width="0.85" height="1.4" fill="#000000"/><rect x="35.00" y="51.00" width="2.85" height="1.4" fill="#af00db"/><rect x="39.00" y="51.00" width="7.85" height="1.4" fill="#795e26"/><rect x="47.20" y="51.70" width="0.6" height="0.7" fill="#000000" opacity="0.6"/><rect x="48.00" y="51.00" width="0.85" height="1.4" fill="#098658"/><rect x="49.20" y="51.70" width="0.6" height="0.7" fill="#000000" opacity="0.6"/><rect x="50.20" y="51.70" width="0.6" height="0.7" fill="#000000" opacity="0.6"/><rect x="2.00" y="53.03" width="6.85" height="1.4" fill="#0000ff"/><rect x="10.00" y="53.03" width="4.85" height="1.4" fill="#0000ff"/><rect x="16.00" y="53.03" width="4.85" height="1.4" fill="#267f99"/><rect x="22.00" y="53.03" width="6.85" height="1.4" fill="#001080"/><rect x="30.00" y="53.03" width="0.85" height="1.4" fill="#000000"/><rect x="32.00" y="53.03" width="2.85" height="1.4" fill="#af00db"/><rect x="36.00" y="53.03" width="4.85" height="1.4" fill="#795e26"/><rect x="41.20" y="53.73" width="0.6" height="0.7" fill="#000000" opacity="0.6"/><rect x="42.20" y="53.73" width="0.6" height="0.7" fill="#000000" opacity="0.6"/><rect x="43.20" y="53.73" width="0.6" height="0.7" fill="#000000" opacity="0.6"/><rect x="2.00" y="57.29" width="2.85" height="1.1" fill="#008000" opacity="1"/><rect x="3.00" y="59.32" width="0.85" height="1.1" fill="#008000" opacity="1"/><rect x="5.00" y="59.32" width="3.85" height="1.1" fill="#008000" opacity="1"/><rect x="10.00" y="59.32" width="7.85" height="1.1" fill="#008000" opacity="1"/><rect x="19.00" y="59.32" width="1.85" height="1.1" fill="#008000" opacity="1"/><rect x="22.00" y="59.32" width="2.85" height="1.1" fill="#008000" opacity="1"/><rect x="26.00" y="59.32" width="3.85" height="1.1" fill="#008000" opacity="1"/><rect x="31.00" y="59.32" width="2.85" height="1.1" fill="#008000" opacity="1"/><rect x="35.00" y="59.32" width="4.85" height="1.1" fill="#008000" opacity="1"/><rect x="41.00" y="59.32" width="1.85" height="1.1" fill="#008000" opacity="1"/><rect x="44.00" y="59.32" width="4.85" height="1.1" fill="#008000" opacity="1"/><rect x="50.00" y="59.32" width="6.85" height="1.1" fill="#008000" opacity="1"/><rect x="58.00" y="59.32" width="1.85" height="1.1" fill="#008000" opacity="1"/><rect x="61.00" y="59.32" width="2.85" height="1.1" fill="#008000" opacity="1"/><rect x="65.00" y="59.32" width="5.85" height="1.1" fill="#008000" opacity="1"/><rect x="72.00" y="59.32" width="1.85" height="1.1" fill="#008000" opacity="1"/><rect x="3.00" y="61.35" width="0.85" height="1.1" fill="#008000" opacity="1"/><rect x="5.00" y="61.35" width="3.85" height="1.1" fill="#008000" opacity="1"/><rect x="10.00" y="61.35" width="2.85" height="1.1" fill="#008000" opacity="1"/><rect x="14.00" y="61.35" width="2.85" height="1.1" fill="#008000" opacity="1"/><rect x="18.00" y="61.35" width="13.85" height="1.1" fill="#008000" opacity="1"/><rect x="33.00" y="61.35" width="4.85" height="1.1" fill="#008000" opacity="1"/><rect x="3.00" y="63.38" width="1.85" height="1.1" fill="#008000" opacity="1"/><rect x="2.00" y="65.21" width="0.85" height="1.4" fill="#000000"/><rect x="3.00" y="65.21" width="7.85" height="1.4" fill="#267f99"/><rect x="2.00" y="67.24" width="5.85" height="1.4" fill="#0000ff"/><rect x="9.00" y="67.24" width="3.85" height="1.4" fill="#267f99"/><rect x="14.00" y="67.24" width="8.85" height="1.4" fill="#795e26"/><rect x="23.20" y="67.94" width="0.6" height="0.7" fill="#000000" opacity="0.6"/><rect x="24.20" y="67.94" width="0.6" height="0.7" fill="#000000" opacity="0.6"/><rect x="26.00" y="67.24" width="0.85" height="1.4" fill="#000000"/><rect x="2.00" y="69.27" width="0.85" height="1.4" fill="#000000"/><rect x="2.00" y="73.53" width="2.85" height="1.1" fill="#008000" opacity="1"/><rect x="3.00" y="75.56" width="0.85" height="1.1" fill="#008000" opacity="1"/><rect x="5.00" y="75.56" width="3.85" height="1.1" fill="#008000" opacity="1"/><rect x="10.00" y="75.56" width="7.85" height="1.1" fill="#008000" opacity="1"/><rect x="19.00" y="75.56" width="1.85" height="1.1" fill="#008000" opacity="1"/><rect x="22.00" y="75.56" width="2.85" height="1.1" fill="#008000" opacity="1"/><rect x="26.00" y="75.56" width="3.85" height="1.1" fill="#008000" opacity="1"/><rect x="31.00" y="75.56" width="3.85" height="1.1" fill="#008000" opacity="1"/><rect x="36.00" y="75.56" width="3.85" height="1.1" fill="#008000" opacity="1"/><rect x="41.00" y="75.56" width="2.85" height="1.1" fill="#008000" opacity="1"/><rect x="45.00" y="75.56" width="4.85" height="1.1" fill="#008000" opacity="1"/><rect x="51.00" y="75.56" width="5.85" height="1.1" fill="#008000" opacity="1"/><rect x="58.00" y="75.56" width="9.85" height="1.1" fill="#008000" opacity="1"/><rect x="69.00" y="75.56" width="4.85" height="1.1" fill="#008000" opacity="1"/><rect x="3.00" y="77.59" width="1.85" height="1.1" fill="#008000" opacity="1"/><rect x="2.00" y="79.42" width="0.85" height="1.4" fill="#000000"/><rect x="3.00" y="79.42" width="7.85" height="1.4" fill="#267f99"/><rect x="2.00" y="81.45" width="5.85" height="1.4" fill="#0000ff"/><rect x="9.00" y="81.45" width="3.85" height="1.4" fill="#267f99"/><rect x="14.00" y="81.45" width="13.85" height="1.4" fill="#795e26"/><rect x="28.20" y="82.15" width="0.6" height="0.7" fill="#000000" opacity="0.6"/><rect x="29.20" y="82.15" width="0.6" height="0.7" fill="#000000" opacity="0.6"/><rect x="31.00" y="81.45" width="0.85" height="1.4" fill="#000000"/><rect x="4.00" y="83.48" width="6.85" height="1.4" fill="#001080"/><rect x="11.20" y="84.18" width="0.6" height="0.7" fill="#000000" opacity="0.6"/><rect x="12.00" y="83.48" width="4.85" height="1.4" fill="#795e26"/><rect x="17.20" y="84.18" width="0.6" height="0.7" fill="#000000" opacity="0.6"/><rect x="18.20" y="84.18" width="0.6" height="0.7" fill="#000000" opacity="0.6"/><rect x="19.20" y="84.18" width="0.6" height="0.7" fill="#000000" opacity="0.6"/><rect x="4.00" y="85.51" width="6.85" height="1.4" fill="#001080"/><rect x="11.20" y="86.21" width="0.6" height="0.7" fill="#000000" opacity="0.6"/><rect x="12.00" y="85.51" width="4.85" height="1.4" fill="#795e26"/><rect x="17.20" y="86.21" width="0.6" height="0.7" fill="#000000" opacity="0.6"/><rect x="18.20" y="86.21" width="0.6" height="0.7" fill="#000000" opacity="0.6"/><rect x="19.20" y="86.21" width="0.6" height="0.7" fill="#000000" opacity="0.6"/><rect x="2.00" y="87.54" width="0.85" height="1.4" fill="#000000"/><rect x="2.00" y="91.80" width="2.85" height="1.1" fill="#008000" opacity="1"/><rect x="3.00" y="93.83" width="0.85" height="1.1" fill="#008000" opacity="1"/><rect x="5.00" y="93.83" width="3.85" height="1.1" fill="#008000" opacity="1"/><rect x="10.00" y="93.83" width="7.85" height="1.1" fill="#008000" opacity="1"/><rect x="19.00" y="93.83" width="1.85" height="1.1" fill="#008000" opacity="1"/><rect x="22.00" y="93.83" width="5.85" height="1.1" fill="#008000" opacity="1"/><rect x="29.00" y="93.83" width="11.85" height="1.1" fill="#008000" opacity="1"/><rect x="42.00" y="93.83" width="5.85" height="1.1" fill="#008000" opacity="1"/><rect x="49.00" y="93.83" width="10.85" height="1.1" fill="#008000" opacity="1"/><rect x="3.00" y="95.86" width="1.85" height="1.1" fill="#008000" opacity="1"/><rect x="2.00" y="97.69" width="0.85" height="1.4" fill="#000000"/><rect x="3.00" y="97.69" width="7.85" height="1.4" fill="#267f99"/><rect x="2.00" y="99.72" width="5.85" height="1.4" fill="#0000ff"/><rect x="9.00" y="99.72" width="3.85" height="1.4" fill="#267f99"/><rect x="14.00" y="99.72" width="17.85" height="1.4" fill="#795e26"/><rect x="32.20" y="100.42" width="0.6" height="0.7" fill="#000000" opacity="0.6"/><rect x="33.20" y="100.42" width="0.6" height="0.7" fill="#000000" opacity="0.6"/><rect x="35.00" y="99.72" width="0.85" height="1.4" fill="#000000"/><rect x="4.00" y="101.95" width="1.85" height="1.1" fill="#008000" opacity="1"/><rect x="7.00" y="101.95" width="4.85" height="1.1" fill="#008000" opacity="1"/><rect x="13.00" y="101.95" width="2.85" height="1.1" fill="#008000" opacity="1"/><rect x="17.00" y="101.95" width="0.85" height="1.1" fill="#008000" opacity="1"/><rect x="19.00" y="101.95" width="6.85" height="1.1" fill="#008000" opacity="1"/><rect x="4.00" y="103.78" width="1.85" height="1.4" fill="#af00db"/><rect x="7.20" y="104.48" width="0.6" height="0.7" fill="#000000" opacity="0.6"/><rect x="8.00" y="103.78" width="6.85" height="1.4" fill="#001080"/><rect x="15.20" y="104.48" width="0.6" height="0.7" fill="#000000" opacity="0.6"/><rect x="16.00" y="103.78" width="2.85" height="1.4" fill="#795e26"/><rect x="19.20" y="104.48" width="0.6" height="0.7" fill="#000000" opacity="0.6"/><rect x="20.20" y="104.48" width="0.6" height="0.7" fill="#000000" opacity="0.6"/><rect x="22.00" y="103.78" width="0.85" height="1.4" fill="#000000"/><rect x="24.00" y="103.78" width="2.85" height="1.4" fill="#098658"/><rect x="27.20" y="104.48" width="0.6" height="0.7" fill="#000000" opacity="0.6"/><rect x="29.00" y="103.78" width="0.85" height="1.4" fill="#000000"/><rect x="6.00" y="105.81" width="11.85" height="1.4" fill="#001080"/><rect x="18.20" y="106.51" width="0.6" height="0.7" fill="#000000" opacity="0.6"/><rect x="19.00" y="105.81" width="10.85" height="1.4" fill="#795e26"/><rect x="30.20" y="106.51" width="0.6" height="0.7" fill="#000000" opacity="0.6"/><rect x="31.00" y="105.81" width="2.85" height="1.4" fill="#098658"/><rect x="34.20" y="106.51" width="0.6" height="0.7" fill="#000000" opacity="0.6"/><rect x="36.00" y="105.81" width="2.85" height="1.4" fill="#098658"/><rect x="39.20" y="106.51" width="0.6" height="0.7" fill="#000000" opacity="0.6"/><rect x="40.20" y="106.51" width="0.6" height="0.7" fill="#000000" opacity="0.6"/><rect x="42.00" y="106.01" width="1.85" height="1.1" fill="#008000" opacity="1"/><rect x="45.00" y="106.01" width="4.85" height="1.1" fill="#008000" opacity="1"/><rect x="51.00" y="106.01" width="7.85" height="1.1" fill="#008000" opacity="1"/><rect x="60.00" y="106.01" width="3.85" height="1.1" fill="#008000" opacity="1"/><rect x="65.00" y="106.01" width="4.85" height="1.1" fill="#008000" opacity="1"/><rect x="4.00" y="107.84" width="0.85" height="1.4" fill="#000000"/><rect x="6.00" y="107.84" width="3.85" height="1.4" fill="#af00db"/><rect x="11.00" y="107.84" width="0.85" height="1.4" fill="#000000"/><rect x="6.00" y="109.87" width="11.85" height="1.4" fill="#001080"/><rect x="18.20" y="110.57" width="0.6" height="0.7" fill="#000000" opacity="0.6"/><rect x="19.00" y="109.87" width="8.85" height="1.4" fill="#795e26"/><rect x="28.20" y="110.57" width="0.6" height="0.7" fill="#000000" opacity="0.6"/><rect x="29.20" y="110.57" width="0.6" height="0.7" fill="#000000" opacity="0.6"/><rect x="30.20" y="110.57" width="0.6" height="0.7" fill="#000000" opacity="0.6"/><rect x="32.00" y="110.07" width="1.85" height="1.1" fill="#008000" opacity="1"/><rect x="35.00" y="110.07" width="3.85" height="1.1" fill="#008000" opacity="1"/><rect x="40.00" y="110.07" width="4.85" height="1.1" fill="#008000" opacity="1"/><rect x="4.00" y="111.90" width="0.85" height="1.4" fill="#000000"/><rect x="2.00" y="113.93" width="0.85" height="1.4" fill="#000000"/><rect x="2.00" y="118.19" width="2.85" height="1.1" fill="#008000" opacity="1"/><rect x="3.00" y="120.22" width="0.85" height="1.1" fill="#008000" opacity="1"/><rect x="5.00" y="120.22" width="3.85" height="1.1" fill="#008000" opacity="1"/><rect x="10.00" y="120.22" width="7.85" height="1.1" fill="#008000" opacity="1"/><rect x="19.00" y="120.22" width="1.85" height="1.1" fill="#008000" opacity="1"/><rect x="22.00" y="120.22" width="5.85" height="1.1" fill="#008000" opacity="1"/><rect x="29.00" y="120.22" width="3.85" height="1.1" fill="#008000" opacity="1"/><rect x="34.00" y="120.22" width="3.85" height="1.1" fill="#008000" opacity="1"/><rect x="39.00" y="120.22" width="3.85" height="1.1" fill="#008000" opacity="1"/><rect x="44.00" y="120.22" width="2.85" height="1.1" fill="#008000" opacity="1"/><rect x="48.00" y="120.22" width="4.85" height="1.1" fill="#008000" opacity="1"/><rect x="54.00" y="120.22" width="5.85" height="1.1" fill="#008000" opacity="1"/><rect x="61.00" y="120.22" width="11.85" height="1.1" fill="#008000" opacity="1"/><rect x="74.00" y="120.22" width="4.85" height="1.1" fill="#008000" opacity="1"/><rect x="3.00" y="122.25" width="1.85" height="1.1" fill="#008000" opacity="1"/><rect x="2.00" y="124.08" width="0.85" height="1.4" fill="#000000"/><rect x="3.00" y="124.08" width="7.85" height="1.4" fill="#267f99"/><rect x="2.00" y="126.11" width="5.85" height="1.4" fill="#0000ff"/><rect x="9.00" y="126.11" width="3.85" height="1.4" fill="#267f99"/><rect x="14.00" y="126.11" width="9.85" height="1.4" fill="#795e26"/><rect x="24.20" y="126.81" width="0.6" height="0.7" fill="#000000" opacity="0.6"/><rect x="25.20" y="126.81" width="0.6" height="0.7" fill="#000000" opacity="0.6"/><rect x="27.00" y="126.11" width="0.85" height="1.4" fill="#000000"/><rect x="2.00" y="128.14" width="0.85" height="1.4" fill="#000000"/><rect x="2.00" y="132.40" width="2.85" height="1.1" fill="#008000" opacity="1"/><rect x="3.00" y="134.43" width="0.85" height="1.1" fill="#008000" opacity="1"/><rect x="5.00" y="134.43" width="3.85" height="1.1" fill="#008000" opacity="1"/><rect x="10.00" y="134.43" width="7.85" height="1.1" fill="#008000" opacity="1"/><rect x="19.00" y="134.43" width="1.85" height="1.1" fill="#008000" opacity="1"/><rect x="22.00" y="134.43" width="5.85" height="1.1" fill="#008000" opacity="1"/><rect x="29.00" y="134.43" width="11.85" height="1.1" fill="#008000" opacity="1"/><rect x="42.00" y="134.43" width="5.85" height="1.1" fill="#008000" opacity="1"/><rect x="49.00" y="134.43" width="11.85" height="1.1" fill="#008000" opacity="1"/><rect x="62.00" y="134.43" width="4.85" height="1.1" fill="#008000" opacity="1"/><rect x="3.00" y="136.46" width="1.85" height="1.1" fill="#008000" opacity="1"/><rect x="2.00" y="138.29" width="0.85" height="1.4" fill="#000000"/><rect x="3.00" y="138.29" width="7.85" height="1.4" fill="#267f99"/><rect x="2.00" y="140.32" width="5.85" height="1.4" fill="#0000ff"/><rect x="9.00" y="140.32" width="3.85" height="1.4" fill="#267f99"/><rect x="14.00" y="140.32" width="13.85" height="1.4" fill="#795e26"/><rect x="28.20" y="141.02" width="0.6" height="0.7" fill="#000000" opacity="0.6"/><rect x="29.20" y="141.02" width="0.6" height="0.7" fill="#000000" opacity="0.6"/><rect x="31.00" y="140.32" width="0.85" height="1.4" fill="#000000"/><rect x="4.00" y="142.35" width="11.85" height="1.4" fill="#001080"/><rect x="16.20" y="143.05" width="0.6" height="0.7" fill="#000000" opacity="0.6"/><rect x="17.00" y="142.35" width="10.85" height="1.4" fill="#795e26"/><rect x="28.20" y="143.05" width="0.6" height="0.7" fill="#000000" opacity="0.6"/><rect x="29.00" y="142.35" width="6.85" height="1.4" fill="#001080"/><rect x="36.20" y="143.05" width="0.6" height="0.7" fill="#000000" opacity="0.6"/><rect x="37.00" y="142.35" width="3.85" height="1.4" fill="#795e26"/><rect x="41.20" y="143.05" width="0.6" height="0.7" fill="#000000" opacity="0.6"/><rect x="42.20" y="143.05" width="0.6" height="0.7" fill="#000000" opacity="0.6"/><rect x="43.20" y="143.05" width="0.6" height="0.7" fill="#000000" opacity="0.6"/><rect x="45.00" y="142.35" width="6.85" height="1.4" fill="#001080"/><rect x="52.20" y="143.05" width="0.6" height="0.7" fill="#000000" opacity="0.6"/><rect x="53.00" y="142.35" width="3.85" height="1.4" fill="#795e26"/><rect x="57.20" y="143.05" width="0.6" height="0.7" fill="#000000" opacity="0.6"/><rect x="58.20" y="143.05" width="0.6" height="0.7" fill="#000000" opacity="0.6"/><rect x="59.20" y="143.05" width="0.6" height="0.7" fill="#000000" opacity="0.6"/><rect x="60.20" y="143.05" width="0.6" height="0.7" fill="#000000" opacity="0.6"/><rect x="2.00" y="144.38" width="0.85" height="1.4" fill="#000000"/><rect x="2.00" y="148.64" width="2.85" height="1.1" fill="#008000" opacity="1"/><rect x="3.00" y="150.67" width="0.85" height="1.1" fill="#008000" opacity="1"/><rect x="5.00" y="150.67" width="3.85" height="1.1" fill="#008000" opacity="1"/><rect x="10.00" y="150.67" width="7.85" height="1.1" fill="#008000" opacity="1"/><rect x="19.00" y="150.67" width="1.85" height="1.1" fill="#008000" opacity="1"/><rect x="22.00" y="150.67" width="5.85" height="1.1" fill="#008000" opacity="1"/><rect x="29.00" y="150.67" width="11.85" height="1.1" fill="#008000" opacity="1"/><rect x="42.00" y="150.67" width="5.85" height="1.1" fill="#008000" opacity="1"/><rect x="49.00" y="150.67" width="3.85" height="1.1" fill="#008000" opacity="1"/><rect x="54.00" y="150.67" width="4.85" height="1.1" fill="#008000" opacity="1"/><rect x="3.00" y="152.70" width="1.85" height="1.1" fill="#008000" opacity="1"/><rect x="2.00" y="154.53" width="0.85" height="1.4" fill="#000000"/><rect x="3.00" y="154.53" width="7.85" height="1.4" fill="#267f99"/><rect x="2.00" y="156.56" width="5.85" height="1.4" fill="#0000ff"/><rect x="9.00" y="156.56" width="3.85" height="1.4" fill="#267f99"/><rect x="14.00" y="156.56" width="11.85" height="1.4" fill="#795e26"/><rect x="26.20" y="157.26" width="0.6" height="0.7" fill="#000000" opacity="0.6"/><rect x="27.20" y="157.26" width="0.6" height="0.7" fill="#000000" opacity="0.6"/><rect x="29.00" y="156.56" width="0.85" height="1.4" fill="#000000"/><rect x="2.00" y="158.59" width="0.85" height="1.4" fill="#000000"/><rect x="0.00" y="160.62" width="0.85" height="1.4" fill="#000000"/></g></svg><div class="a" style="left:1157px;top:0;width:1px;height:898px;background:#e3e3e3"></div><div class="a" style="left:1157px;top:100px;width:16px;height:294.6px;background:#c1c1c1"></div><div class="a" style="left:1158px;top:164.5px;width:15px;height:2px;background:#6f6f6f"></div><div class="a" style="left:1163px;top:166px;width:4.5px;height:6px;background:#8c8c8c"></div><div class="a" style="left:1162.8px;top:593px;width:5px;height:8px;background:#a0a0a0"></div></div>
<div class="a" style="left:60px;top:131px;width:307px;height:487.5px;border:3px solid #ff0000;border-radius:2px"></div><svg class="a" style="left:0;top:0" width="600" height="600" viewBox="0 0 600 600"><path d="M268.3 465.3 L470 431.5" stroke="#ff0000" stroke-width="3.3" stroke-linecap="round"/><path d="M483.5 429.3 L468.3 427.5 L471.4 436.2 Z" fill="#ff0000" stroke="#ff0000" stroke-width="1.5" stroke-linejoin="round"/></svg><div id="status" class="a"><svg class="a" style="left:17px;top:5px" width="20" height="18" viewBox="0 0 20 18"><circle cx="9.4" cy="9" r="7" fill="none" stroke="#fff" stroke-width="1.4"/><path d="M6.2 5.8 L12.6 12.2 M12.6 5.8 L6.2 12.2" stroke="#fff" stroke-width="1.4"/></svg><div class="st" style="left:38px">0</div><svg class="a" style="left:50px;top:5px" width="19" height="17" viewBox="0 0 19 17"><path d="M9.2 1.2 L17.2 15.2 L1.2 15.2 Z" fill="none" stroke="#fff" stroke-width="1.4" stroke-linejoin="round"/><path d="M9.2 6 L9.2 11 M9.2 12.4 L9.2 14" stroke="#fff" stroke-width="1.3"/></svg><div class="st" style="left:71px">0</div><svg class="a" style="left:98px;top:5px" width="18" height="19" viewBox="0 0 18 19"><g stroke="#fff" stroke-width="1.3" fill="none" stroke-linejoin="round" stroke-linecap="round"><path d="M1.6 4.2 L3.6 2.4 L6.3 5 L5.6 6.6 L4.1 7.1 Z"/><path d="M5.4 6.8 L13.6 15.4 L12.4 16.6 L4.4 8"/><path d="M2.2 16.2 L9.6 8.8 Q8.4 5.8 10.4 3.6 Q12 2.2 14 2.6 L11.8 4.8 L12.2 6.6 L14 7 L16.2 4.8 Q16.6 7 15 8.6 Q13 10.4 10.6 9.6 L3.4 17.2 Z"/></g></svg><div class="st" style="left:120px">1</div><div class="st" style="left:145px;font-size:14.1px">0% Publish Diagnostics</div><div class="st" style="left:1053px">Ln 23, Col 40</div><div class="st" style="left:1155px">Spaces: 2</div><div class="st" style="left:1231px">UTF-8</div><div class="st" style="left:1290px">LF</div><div class="st" style="left:1323px">Java</div><div class="st" style="left:1405px">WPILib</div><svg class="a" style="left:1368px;top:5px" width="20" height="19" viewBox="0 0 20 19"><path d="M1.6 9.6 L5.4 9.6 L10.2 3.6 Q11.6 2.4 12.4 3.8 L11.4 7.6 L16.6 7.6 Q18 8 17.6 9.6 L15.8 15.4 Q15.4 16.4 14.2 16.4 L1.6 16.4 Z" fill="none" stroke="#fff" stroke-width="1.4" stroke-linejoin="round"/></svg><svg class="a" style="left:1466px;top:4px" width="20" height="20" viewBox="0 0 20 20"><circle cx="10" cy="9.5" r="7.2" fill="none" stroke="#fff" stroke-width="1.4"/><circle cx="7.6" cy="7.8" r="1.1" fill="#fff"/><circle cx="12.4" cy="7.8" r="1.1" fill="#fff"/><path d="M6.4 11 Q10 14.6 13.6 11" stroke="#fff" stroke-width="1.4" fill="none"/></svg><svg class="a" style="left:1503px;top:5px" width="18" height="20" viewBox="0 0 18 20"><path d="M3.2 14 L4.4 10.8 L4.4 7 Q4.4 2 9 2 Q13.6 2 13.6 7 L13.6 10.8 L14.8 14 Z" fill="none" stroke="#fff" stroke-width="1.4" stroke-linejoin="round"/><path d="M7.4 14.6 Q7.4 16.4 9 16.4 Q10.6 16.4 10.6 14.6" fill="none" stroke="#fff" stroke-width="1.3"/></svg></div>
<div class="a" style="left:0;top:1028px;width:1539px;height:2px;background:linear-gradient(90deg,#0096d2,#0a5fb8 40%,#0a3e9e)"></div><div class="a" style="left:1538px;top:0;width:1px;height:1030px;background:#0b3f9f"></div></body></html>
